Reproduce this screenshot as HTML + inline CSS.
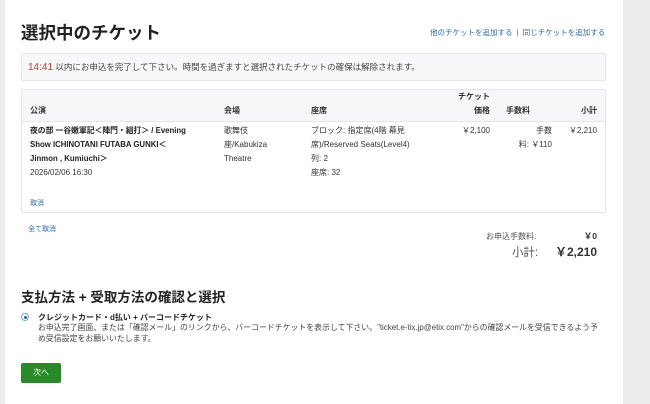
<!DOCTYPE html>
<html><head><meta charset="utf-8"><style>
*{margin:0;padding:0;box-sizing:border-box}
body{width:650px;height:404px;background:#ececec;font-family:"Liberation Sans","Noto Sans CJK JP",sans-serif;color:#333;position:relative;overflow:hidden}
.main{position:absolute;left:5px;top:0;width:618px;height:404px;background:#fff}
.a{position:absolute;white-space:nowrap}
.link{color:#2a6ca8}
.t{font-size:8px;line-height:14px}
.r{text-align:right}
</style></head><body>
<div class="main"></div>
<div class="a" style="left:21px;top:20px;font-size:17.5px;font-weight:bold;color:#222">選択中のチケット</div>
<div class="a link" style="left:430px;top:27px;font-size:7.5px">他のチケットを追加する &nbsp;|&nbsp; 同じチケットを追加する</div>
<div class="a" style="left:21px;top:53px;width:585px;height:28px;background:#f7f8fa;border:1px solid #e3e5e8;border-radius:2px"></div>
<div class="a" style="left:28px;top:61px;font-size:8.5px;color:#444"><span style="color:#b04030;font-size:10px">14:41</span> 以内にお申込を完了して下さい。時間を過ぎますと選択されたチケットの確保は解除されます。</div>
<div class="a" style="left:21px;top:89px;width:585px;height:124px;border:1px solid #e3e5e8;border-radius:2px"></div>
<div class="a" style="left:22px;top:90px;width:583px;height:32px;background:#f6f7f9;border-bottom:1px solid #e6e6e6"></div>
<div class="a t" style="left:30px;top:104px;font-weight:bold">公演</div>
<div class="a t" style="left:224px;top:104px;font-weight:bold">会場</div>
<div class="a t" style="left:311px;top:104px;font-weight:bold">座席</div>
<div class="a t r" style="left:430px;width:60px;top:90px;font-weight:bold">チケット<br>価格</div>
<div class="a t" style="left:506px;top:104px;font-weight:bold">手数料</div>
<div class="a t r" style="left:540px;width:57px;top:104px;font-weight:bold">小計</div>
<div class="a t" style="left:30px;top:124px;font-weight:bold;color:#222;font-size:7.8px">夜の部 一谷嫩軍記＜陣門・組打＞ / Evening<br>Show ICHINOTANI FUTABA GUNKI＜<br>Jinmon , Kumiuchi＞</div>
<div class="a t" style="left:30px;top:166px">2026/02/06 16:30</div>
<div class="a t" style="left:224px;top:124px">歌舞伎<br>座/Kabukiza<br>Theatre</div>
<div class="a t" style="left:311px;top:124px">ブロック: 指定席(4階 幕見<br>席)/Reserved Seats(Level4)<br>列: 2<br>座席: 32</div>
<div class="a t r" style="left:430px;width:60px;top:124px">￥2,100</div>
<div class="a t r" style="left:500px;width:52px;top:124px">手数<br>料: ￥110</div>
<div class="a t r" style="left:540px;width:57px;top:124px">￥2,210</div>
<div class="a link" style="left:30px;top:198px;font-size:7px">取消</div>
<div class="a link" style="left:28px;top:224px;font-size:7px">全て取消</div>
<div class="a" style="left:486px;top:231px;font-size:8px;color:#555">お申込手数料:</div>
<div class="a r" style="left:550px;width:47px;top:230px;font-size:8.5px;font-weight:bold">￥0</div>
<div class="a" style="left:512px;top:244px;font-size:11.5px;color:#555">小計:</div>
<div class="a r" style="left:530px;width:67px;top:243px;font-size:12px;font-weight:bold">￥2,210</div>
<div class="a" style="left:21px;top:286px;font-size:13.5px;font-weight:bold;color:#222">支払方法 + 受取方法の確認と選択</div>
<div class="a" style="left:21px;top:313px;width:8px;height:8px;border-radius:50%;border:1px solid #7aa6d6;background:#fff"><div style="position:absolute;left:1.5px;top:1.5px;width:3px;height:3px;border-radius:50%;background:#1a5fbf"></div></div>
<div class="a" style="left:38px;top:312px;font-size:8px;font-weight:bold;color:#222">クレジットカード・d払い + バーコードチケット</div>
<div class="a" style="left:38px;top:323px;font-size:7.9px;line-height:10.5px;color:#444">お申込完了画面、または「確認メール」のリンクから、バーコードチケットを表示して下さい。"ticket.e-tix.jp@etix.com"からの確認メールを受信できるよう予<br>め受信設定をお願いいたします。</div>
<div class="a" style="left:21px;top:363px;width:40px;height:20px;background:#2a8a2a;border-radius:2px;color:#fff;font-size:8px;line-height:20px;text-align:center">次へ</div>
</body></html>
